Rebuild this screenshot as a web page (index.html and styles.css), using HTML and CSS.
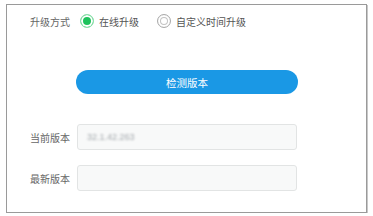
FILE: index.html
```html
<!DOCTYPE html>
<html lang="zh-CN">
<head>
  <meta charset="UTF-8">
  <title>升级</title>
  <link rel="stylesheet" href="styles.css">
</head>
<body>
  <div class="panel">
    <div class="row mode_row">
      <span class="label">升级方式</span>
      <div class="radios">
        <label class="radio on"><i class="dot"></i>在线升级</label>
        <label class="radio"><i class="dot"></i>自定义时间升级</label>
      </div>
    </div>
    <div class="row btn_row">
      <button class="check_btn">检测版本</button>
    </div>
    <div class="row field_row first">
      <span class="label">当前版本</span>
      <div class="field"><span class="blur">32.1.42.263</span></div>
    </div>
    <div class="row field_row">
      <span class="label">最新版本</span>
      <div class="field"></div>
    </div>
  </div>
</body>
</html>
```
FILE: styles.css
```css
* {margin: 0; padding: 0; box-sizing: border-box;}
body {background: #fff; font-family: "Noto Sans CJK SC", "Noto Sans", sans-serif; font-size: 10px; color: #555;}

.panel {margin: 4px 0 0 6px; width: 361px; height: 209px; border: 1px solid #9a9a9a; box-shadow: 1px 1px 0 #c8c8c8; padding-left: 23px;}

.row {display: flex; align-items: center;}
.label {width: 47px; flex: none; color: #666;}

.mode_row {height: 22px; margin-top: 5px;}
.radios {display: flex; gap: 18px; margin-left: 3px;}
.radio {display: flex; align-items: center; gap: 5px; color: #555;}
.radio .dot {width: 14px; height: 14px; border-radius: 50%; border: 1px solid #aaa; background: #fff; box-shadow: inset 0 0 0 2px #fff, inset 0 0 0 3px #c4c4c4;}
.radio.on .dot {border-color: #8fe0ad; background: #1ec25c; box-shadow: inset 0 0 0 2px #fff;}

.btn_row {margin-top: 38px; padding-left: 46px;}
.check_btn {width: 222px; height: 24px; border: none; border-radius: 12px; background: #1a98e5; color: #fff; font-family: inherit; font-size: 10.5px;}

.field_row {margin-top: 15px;}
.field_row.first {margin-top: 30px;}
.field {width: 220px; height: 26px; border: 1px solid #e2e4e4; border-radius: 3px; background: #f8f9f9; padding-left: 9px; display: flex; align-items: center;}
.blur {color: #a3a8ac; font-size: 9px; font-family: "Liberation Sans", sans-serif; filter: blur(1px);}
```
